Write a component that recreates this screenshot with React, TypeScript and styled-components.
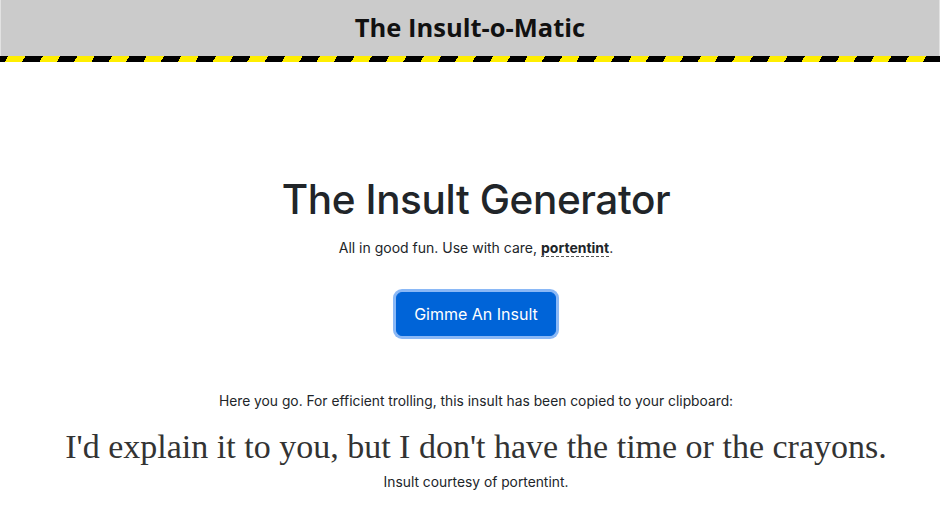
import styled, { createGlobalStyle } from "styled-components";

const GlobalStyle = createGlobalStyle`
  html, body {
    margin: 0;
    padding: 0;
    background: #fff;
  }
  body {
    font-family: Inter, "Liberation Sans", sans-serif;
    color: #212529;
  }
`;

function App() {
  return (
    <>
      <GlobalStyle />
      <Root>
        <Header>
          <Brand>The Insult-o-Matic</Brand>
        </Header>
        <Hazard />

        <Main>
          <Title>The Insult Generator</Title>
          <Lead>
            All in good fun. Use with care, <User>portentint</User>.
          </Lead>

          <GimmeBtn type="button">Gimme An Insult</GimmeBtn>

          <Note>
            Here you go. For efficient trolling, this insult has been copied to
            your clipboard:
          </Note>
          <Insult>
            I'd explain it to you, but I don't have the time or the crayons.
          </Insult>
          <Note>Insult courtesy of portentint.</Note>
        </Main>
      </Root>
    </>
  );
}

export default App;

const Root = styled.div`
  display: flex;
  flex-direction: column;
  min-height: 522px;
`;

const Header = styled.header`
  display: flex;
  justify-content: center;
  align-items: center;
  height: 56px;
  background-color: #cbcbcb;
  border-left: 1px solid #e2e2e2;
  border-right: 1px solid #e2e2e2;
`;

const Brand = styled.div`
  font-family: "Open Sans", Lato, sans-serif;
  font-weight: 700;
  font-size: 25.5px;
  color: #111;
  margin-top: -2px;
`;

const Hazard = styled.div`
  height: 6px;
  background: repeating-linear-gradient(
    -60deg,
    #000 0px,
    #000 15px,
    #ffee00 15px,
    #ffee00 30px
  );
`;

const Main = styled.main`
  display: flex;
  flex-direction: column;
  align-items: center;
  padding: 114px 0 0 12px;
`;

const Title = styled.h1`
  margin: 0;
  font-size: 40.5px;
  font-weight: 500;
  line-height: 48px;
  letter-spacing: -0.4px;
`;

const Lead = styled.p`
  margin: 14px 0 0;
  font-size: 14px;
  line-height: 20px;
`;

const User = styled.span`
  font-weight: 700;
  border-bottom: 1px dashed #555;
`;

const GimmeBtn = styled.button`
  margin: 34px 0 56px;
  padding: 0 14px;
  height: 44px;
  width: 160px;
  font-family: Inter, "Liberation Sans", sans-serif;
  font-size: 16px;
  color: #fff;
  background-color: #0064d8;
  border: 1px solid #0064d8;
  border-radius: 6px;
  box-shadow: 0 0 0 3px #8ab8f6;
  cursor: pointer;
`;

const Note = styled.p`
  margin: 0;
  font-size: 13.8px;
  line-height: 18px;
`;

const Insult = styled.p`
  margin: 17px 0 6px;
  font-family: "Liberation Serif", serif;
  font-size: 34px;
  line-height: 40px;
  color: #333;
`;
